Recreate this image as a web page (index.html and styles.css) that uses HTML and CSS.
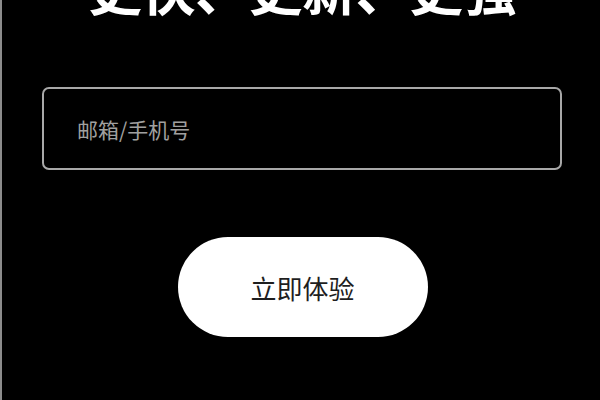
FILE: index.html
```html
<!DOCTYPE html>
<html lang="zh">
<head>
<meta charset="utf-8">
<link rel="stylesheet" href="styles.css">
</head>
<body>
<main class="page">
  <h1 class="title">更快、更新、更强</h1>
  <div class="field"><input class="input" type="text" placeholder="邮箱/手机号"></div>
  <button class="cta">立即体验</button>
</main>
</body>
</html>
```
FILE: styles.css
```css
html, body {
  margin: 0;
  padding: 0;
  background: #000;
  height: 100%;
  overflow: hidden;
}
body {
  border-left: 2px solid #8c8c8c;
  box-sizing: border-box;
  font-family: "Noto Sans CJK SC", "Noto Sans", sans-serif;
}
.page {
  display: flex;
  flex-direction: column;
  align-items: center;
}
.title {
  margin: -42px 0 0 0;
  font-size: 54px;
  line-height: 60px;
  font-weight: 700;
  color: #fff;
  letter-spacing: -0.5px;
  white-space: nowrap;
  padding-left: 2px;
}
.field {
  margin-top: 69px;
  width: 520px;
  margin-left: 2px;
}
.input {
  box-sizing: border-box;
  width: 100%;
  height: 83px;
  background: #000;
  border: 2px solid #a8a8a8;
  border-radius: 7px;
  padding: 0 0 0 33px;
  font-family: "Noto Sans CJK SC", sans-serif;
  font-size: 21px;
  color: #ccc;
  outline: none;
}
.input::placeholder {
  color: #a0a0a0;
}
.cta {
  margin-top: 67px;
  margin-left: 3px;
  width: 250px;
  height: 100px;
  border: none;
  border-radius: 50px;
  background: #fff;
  color: #1e1e1e;
  font-family: "Noto Sans CJK SC", sans-serif;
  font-size: 26px;
  padding: 0;
}
```
